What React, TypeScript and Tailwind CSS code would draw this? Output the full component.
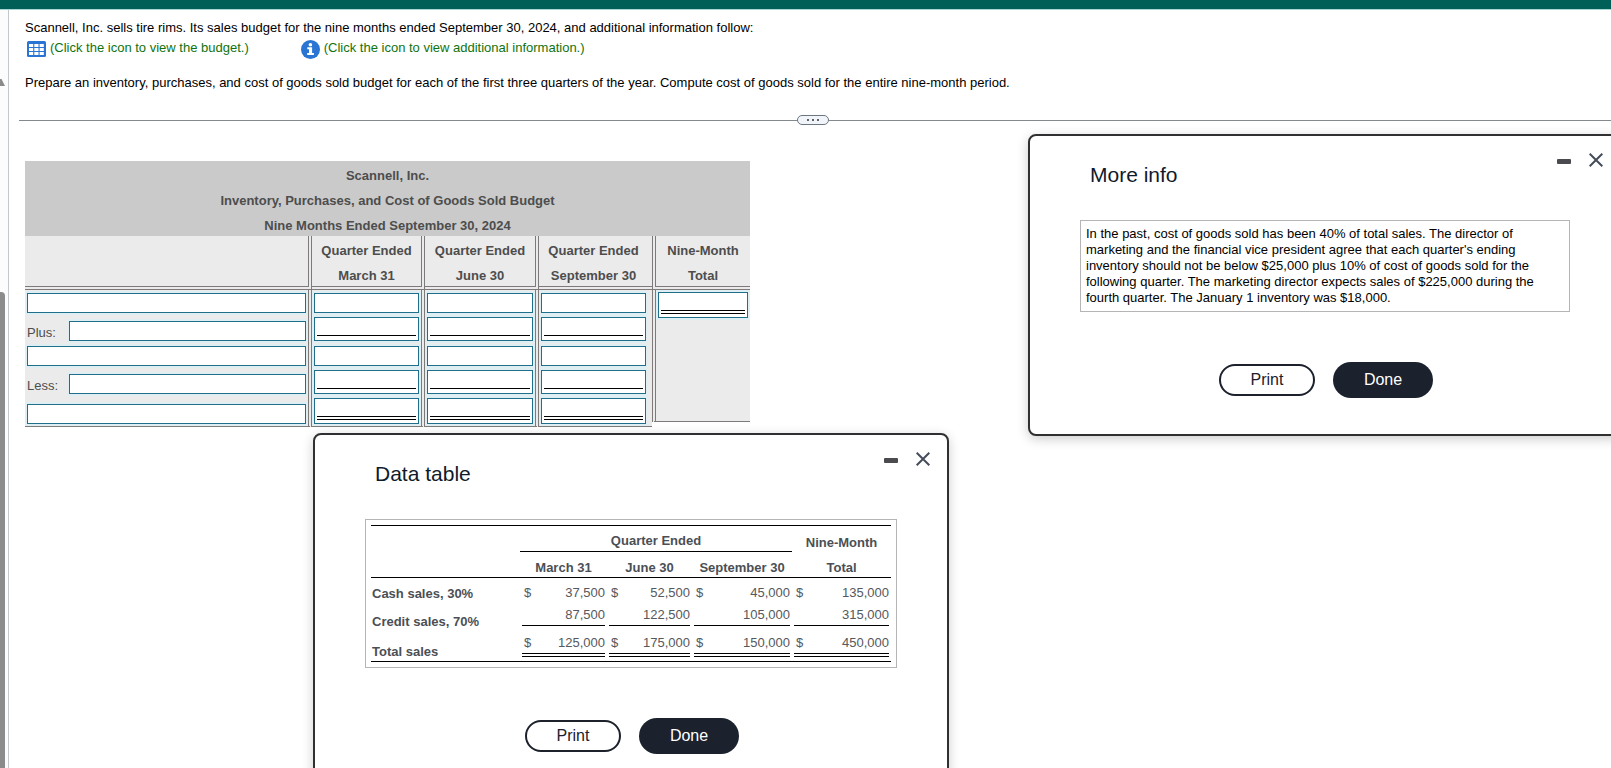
import type { ReactNode } from "react";

type Rule = "none" | "single" | "double";

const QUARTERS = ["March 31", "June 30", "September 30"];

const BUDGET_ROWS: { id: string; label?: string; rule: Rule }[] = [
  { id: "line-1", rule: "none" },
  { id: "line-2", label: "Plus:", rule: "single" },
  { id: "line-3", rule: "none" },
  { id: "line-4", label: "Less:", rule: "single" },
  { id: "line-5", rule: "double" },
];

const SALES_ROWS: { label: string; values: string[]; dollar: boolean; rule: Rule }[] = [
  { label: "Cash sales, 30%", values: ["37,500", "52,500", "45,000", "135,000"], dollar: true, rule: "none" },
  { label: "Credit sales, 70%", values: ["87,500", "122,500", "105,000", "315,000"], dollar: false, rule: "single" },
  { label: "Total sales", values: ["125,000", "175,000", "150,000", "450,000"], dollar: true, rule: "double" },
];

function TableIcon() {
  return (
    <svg width="19" height="16" viewBox="0 0 19 16" aria-hidden="true">
      <rect width="19" height="16" rx="1.5" fill="#2a75d3" />
      {[3, 7, 11].map((y) =>
        [2, 7.3, 12.6].map((x) => <rect key={`${x}-${y}`} x={x} y={y} width="4.2" height="3" fill="#fff" />)
      )}
    </svg>
  );
}

function InfoIcon() {
  return (
    <svg width="19" height="19" viewBox="0 0 19 19" aria-hidden="true">
      <circle cx="9.5" cy="9.5" r="9.5" fill="#2a75d3" />
      <circle cx="9.4" cy="4.7" r="1.8" fill="#fff" />
      <path d="M6.3 7.3h4.8v5.7h1.8v2H6.2v-2H8V9.3H6.3z" fill="#fff" />
    </svg>
  );
}

function AnswerBox({ label, rule = "none" }: { label: string; rule?: Rule }) {
  if (rule === "none") {
    return (
      <input
        aria-label={label}
        className="block h-5 w-full border border-[#1f6f8b] bg-white px-1 text-[13px] ring-2 ring-[#dfeef2] outline-none"
      />
    );
  }
  return (
    <div
      className={`border border-[#1f6f8b] bg-white px-[2px] ring-2 ring-[#dfeef2] ${
        rule === "double" ? "pb-[3px]" : "pb-1"
      }`}
    >
      <input
        aria-label={label}
        className={`block w-full border-black px-1 text-[13px] outline-none ${
          rule === "double" ? "h-[21px] border-b-4 border-double" : "h-[18px] border-b"
        }`}
      />
    </div>
  );
}

function BudgetTable() {
  const cellHeight = { none: "h-[25px]", single: "h-7", double: "h-[31px] border-b" };
  return (
    <table className="w-[725px] table-fixed border-separate border-spacing-0 text-[13px] text-[#4d4d4d]">
      <caption className="bg-[#cacaca] font-bold">
        <p className="pt-1 leading-[21px]">Scannell, Inc.</p>
        <p className="pt-1 leading-[21px]">Inventory, Purchases, and Cost of Goods Sold Budget</p>
        <p className="pt-1 leading-[21px]">Nine Months Ended September 30, 2024</p>
      </caption>
      <colgroup>
        <col className="w-[287px]" />
        <col className="w-[113px]" />
        <col className="w-[114px]" />
        <col className="w-[113px]" />
        <col className="w-[98px]" />
      </colgroup>
      <thead>
        <tr className="bg-[#ebebeb]">
          <td className="border-r-4 border-b-4 border-double border-[#7d7a79]" />
          {QUARTERS.map((q, i) => (
            <th
              key={q}
              className={`border-b-4 border-double border-[#7d7a79] p-0 ${i < 2 ? "border-r-4" : "pr-1"}`}
            >
              <p className="pt-1 leading-[21px]">Quarter Ended</p>
              <p className="pt-1 leading-[21px]">{q}</p>
            </th>
          ))}
          <th className="border-b-4 border-l-4 border-double border-[#7d7a79] p-0">
            <p className="pt-1 leading-[21px]">Nine-Month</p>
            <p className="pt-1 leading-[21px]">Total</p>
          </th>
        </tr>
      </thead>
      <tbody>
        {BUDGET_ROWS.map((row, r) => (
          <tr key={row.id}>
            <td
              className={`border-r-4 border-[#7d7a79] bg-[#ebebeb] px-[2px] pt-0 pb-[2px] align-bottom [border-right-style:double] ${cellHeight[row.rule]}`}
            >
              <div className="flex items-end">
                {row.label && (
                  <span className="w-[42px] shrink-0 leading-4">{row.label}</span>
                )}
                <AnswerBox label={row.label ? `${row.label} account` : `Account ${r + 1}`} />
              </div>
            </td>
            {QUARTERS.map((q, i) => (
              <td
                key={q}
                className={`border-[#7d7a79] bg-[#ebebeb] pt-0 pb-[2px] pl-[2px] align-bottom ${
                  i < 2 ? "border-r-4 pr-[2px] [border-right-style:double]" : "pr-[6px]"
                } ${cellHeight[row.rule]}`}
              >
                <AnswerBox label={`${q} amount ${r + 1}`} rule={row.rule} />
              </td>
            ))}
            {r === 0 && (
              <td rowSpan={5} className="p-0 align-top">
                <div className="h-[132px] border-b border-l-4 border-[#7d7a79] bg-[#ebebeb] p-[2px] [border-left-style:double]">
                  <AnswerBox label="Nine-month total" rule="double" />
                </div>
              </td>
            )}
          </tr>
        ))}
      </tbody>
    </table>
  );
}

function SalesTable() {
  return (
    <table className="w-[520px] table-fixed border-separate border-spacing-0 border-y border-black text-[13px] text-[#55585c]">
      <colgroup>
        <col className="w-[149px]" />
        <col className="w-[87px]" />
        <col className="w-[85px]" />
        <col className="w-[100px]" />
        <col className="w-[99px]" />
      </colgroup>
      <thead className="text-[#4b4f55]">
        <tr>
          <td />
          <th colSpan={3} className="h-[26px] border-b border-black p-0 align-bottom leading-5">
            Quarter Ended
          </th>
          <th className="p-0 align-bottom leading-[18px]">Nine-Month</th>
        </tr>
        <tr>
          <td className="border-b border-black" />
          {[...QUARTERS, "Total"].map((h) => (
            <th key={h} className="h-[26px] border-b border-black p-0 align-bottom leading-[18px]">
              {h}
            </th>
          ))}
        </tr>
      </thead>
      <tbody>
        {SALES_ROWS.map((row) => (
          <tr key={row.label}>
            <th
              className={`p-0 pl-px text-left align-bottom text-[#4b4f55] ${
                row.rule === "none"
                  ? "h-[26px] leading-5"
                  : row.rule === "single"
                    ? "h-[27px] leading-[18px]"
                    : "h-[30px] leading-[18px]"
              }`}
            >
              {row.label}
            </th>
            {row.values.map((v, i) => (
              <td
                key={i}
                className={`px-[2px] pb-0 align-top ${
                  row.rule === "none" ? "pt-1" : row.rule === "double" ? "pt-px" : "pt-0"
                }`}
              >
                <div
                  className={`flex justify-between border-black pl-[2px] leading-[21px] ${
                    row.rule === "single" ? "border-b" : row.rule === "double" ? "border-b-4 border-double" : ""
                  }`}
                >
                  <span>{row.dollar ? "$" : ""}</span>
                  <span>{v}</span>
                </div>
              </td>
            ))}
          </tr>
        ))}
      </tbody>
    </table>
  );
}

function Dialog({ title, className, children }: { title: string; className: string; children: ReactNode }) {
  return (
    <section
      role="dialog"
      aria-label={title}
      className={`absolute rounded-lg border-2 border-[#303032] bg-white px-[50px] pb-9 shadow-[0_3px_12px_rgba(0,0,0,0.2)] ${className}`}
    >
      <div className="flex h-[84px] items-start justify-between">
        <h2 className="pt-[26px] pl-[10px] text-[21px] leading-[26px] text-[#0f1a2b]">{title}</h2>
        <div className="-mr-[33px] flex items-center gap-[18px] pt-4">
          <button aria-label="Minimize" className="flex h-4 w-[14px] items-center">
            <span className="mt-[3px] h-[5px] w-full rounded-[1px] bg-[#4b4b4f]" />
          </button>
          <button aria-label="Close">
            <svg width="14" height="14" viewBox="0 0 14 14" stroke="#454c5a" strokeWidth="2" aria-hidden="true">
              <path d="M0.7 0.7L13.3 13.3M13.3 0.7L0.7 13.3" />
            </svg>
          </button>
        </div>
      </div>
      <div className="border border-[#b5b5b5] p-[5px]">{children}</div>
      <div className="mt-[50px] flex items-center justify-center gap-[18px] pl-[2px] text-base">
        <button className="h-8 w-24 rounded-full border-2 border-[#1c212c] text-[#1c212c]">Print</button>
        <button className="h-9 w-[100px] rounded-full bg-[#1b212d] text-white">Done</button>
      </div>
    </section>
  );
}

export default function App() {
  return (
    <div className="relative flex h-screen flex-col overflow-hidden bg-white font-['Liberation_Sans',Arial,sans-serif] text-[13px] text-black">
      <header className="h-[10px] shrink-0 border-b border-[#a9d6d2] bg-[#005f56]" />
      <div className="flex min-h-0 flex-1">
        <aside className="flex w-[9px] shrink-0 flex-col border-r border-[#c3c8cc] bg-[#fcfcfc]">
          <svg className="mt-[69px]" width="5" height="7" viewBox="0 0 5 7" aria-hidden="true">
            <path d="M0 0h1.5L5 7H0z" fill="#8b8b8b" />
          </svg>
          <div className="mt-[206px] w-[5px] flex-1 rounded-tr bg-[#8b8b8b]" />
        </aside>
        <main className="min-w-0 flex-1">
          <div className="pt-2 pl-4 leading-5">
            <p>
              Scannell, Inc. sells tire rims. Its sales budget for the nine months ended September 30, 2024, and
              additional information follow:
            </p>
            <div className="flex gap-[52px] text-[#107310]">
              <a href="#budget" className="flex gap-1 pl-[2px]">
                <span className="pt-[3px]">
                  <TableIcon />
                </span>
                (Click the icon to view the budget.)
              </a>
              <a href="#info" className="flex gap-1">
                <span className="h-5 pt-[2px]">
                  <InfoIcon />
                </span>
                (Click the icon to view additional information.)
              </a>
            </div>
            <p className="mt-[15px]">
              Prepare an inventory, purchases, and cost of goods sold budget for each of the first three quarters of
              the year. Compute cost of goods sold for the entire nine-month period.
            </p>
          </div>
          <div className="mt-[22px] flex items-center pl-[10px]">
            <div className="h-px w-1/2 bg-[#84898d]" />
            <button
              aria-label="Resize panels"
              className="flex h-[10px] w-8 shrink-0 items-center justify-center gap-[3px] rounded-full border border-[#6c7682] bg-[#f1f5f9] -ml-[18px]"
            >
              <span className="size-[2px] bg-[#5c6470]" />
              <span className="size-[2px] bg-[#5c6470]" />
              <span className="size-[2px] bg-[#5c6470]" />
            </button>
            <div className="h-px flex-1 bg-[#84898d]" />
          </div>
          <div className="mt-9 pl-4">
            <BudgetTable />
          </div>
        </main>
      </div>

      <Dialog title="More info" className="top-[134px] left-[1028px] w-[594px]">
        <p className="leading-4">
          In the past, cost of goods sold has been 40% of total sales. The director of marketing and the financial
          vice president agree that each quarter's ending inventory should not be below $25,000 plus 10% of cost of
          goods sold for the following quarter. The marketing director expects sales of $225,000 during the fourth
          quarter. The January 1 inventory was $18,000.
        </p>
      </Dialog>

      <Dialog title="Data table" className="top-[433px] left-[313px] w-[636px]">
        <SalesTable />
      </Dialog>
    </div>
  );
}
